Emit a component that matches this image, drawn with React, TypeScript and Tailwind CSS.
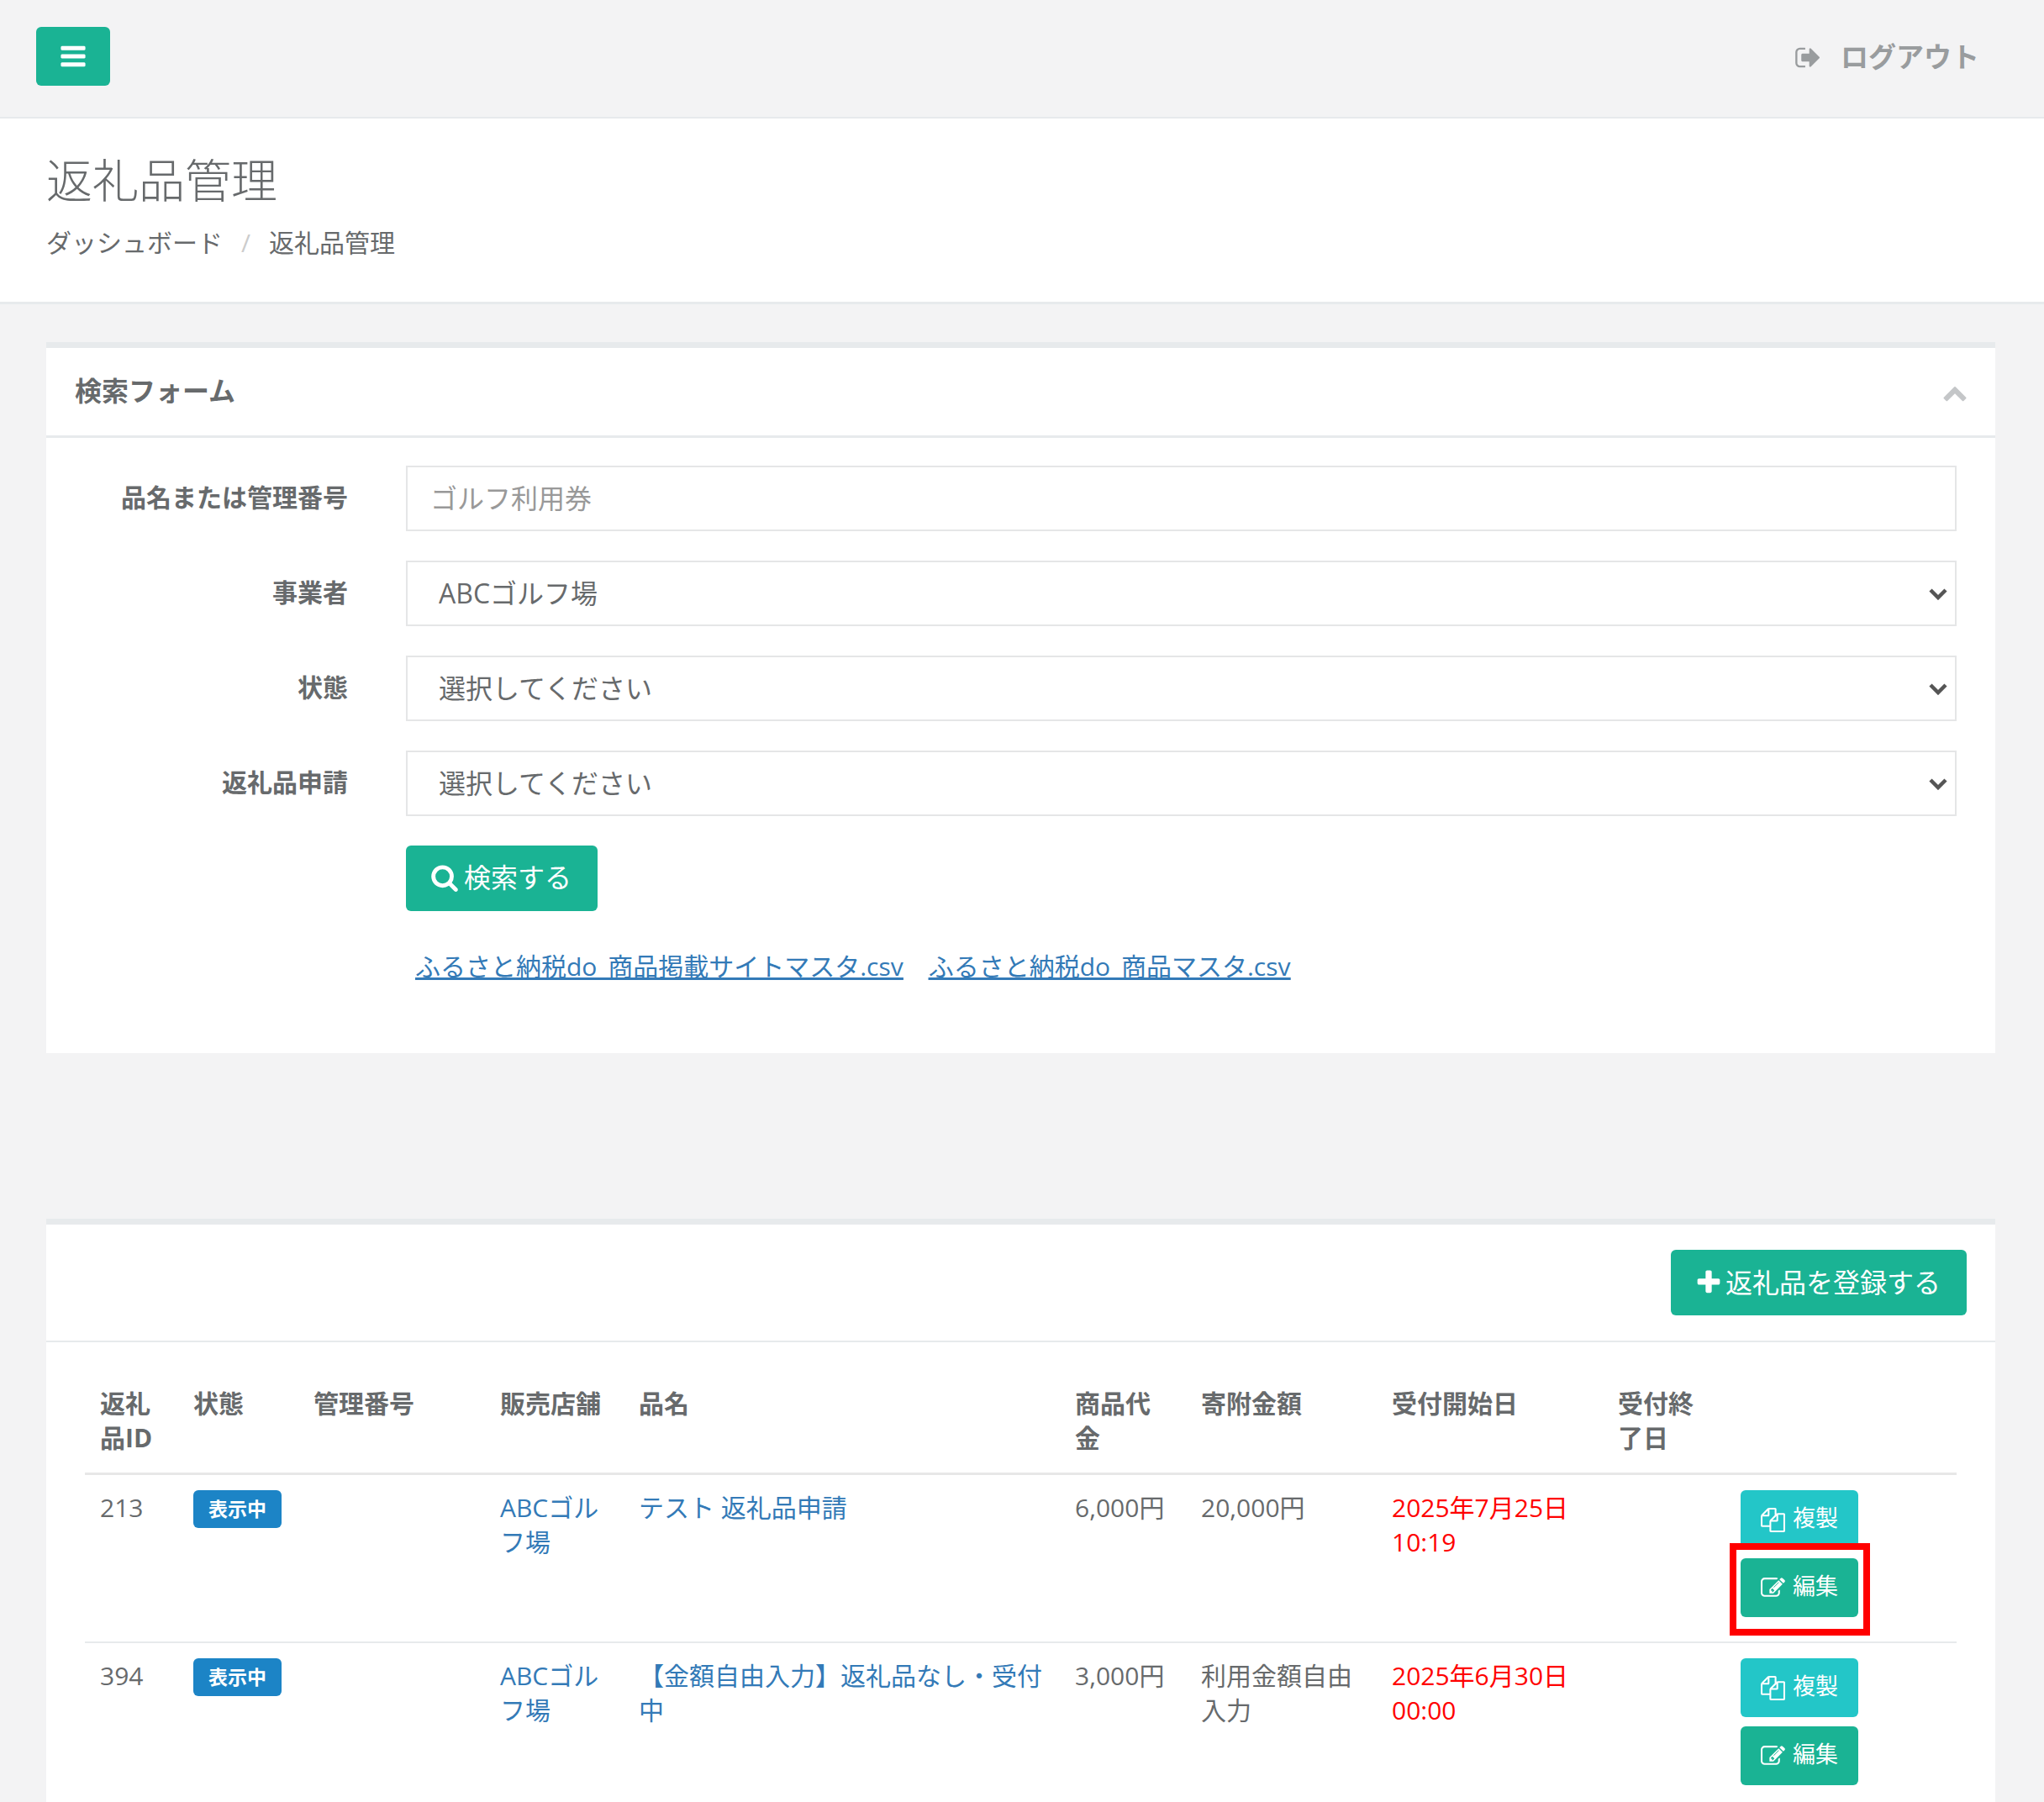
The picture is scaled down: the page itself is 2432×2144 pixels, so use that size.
import React from "react";

const Fa = ({ d, className }: { d: string; className: string }) => (
  <svg viewBox="0 0 1792 1792" fill="currentColor" className={className}>
    <path d={d} />
  </svg>
);

const COPY = "M1696 384q40 0 68 28t28 68v1216q0 40-28 68t-68 28h-960q-40 0-68-28t-28-68v-288h-544q-40 0-68-28t-28-68v-672q0-40 20-88t48-76l408-408q28-28 76-48t88-20h416q40 0 68 28t28 68v328q68-40 128-40h416zm-544 213l-299 299h299v-299zm-640-384l-299 299h299v-299zm196 647l316-316v-416h-384v416q0 40-28 68t-68 28h-416v640h512v-256q0-40 20-92t48-80zm956 804v-1152h-384v416q0 40-28 68t-68 28h-416v640h896z";
const EDIT = "M888 1184l116-116-152-152-116 116v56h96v96h56zm440-720q-16-16-33 1l-350 350q-17 17-1 33t33-1l350-350q17-17 1-33zm80 594v190q0 119-84.5 203.5t-203.5 84.5h-832q-119 0-203.5-84.5t-84.5-203.5v-832q0-119 84.5-203.5t203.5-84.5h832q63 0 117 25 15 7 18 23 3 17-9 29l-49 49q-14 14-32 8-23-6-45-6h-832q-66 0-113 47t-47 113v832q0 66 47 113t113 47h832q66 0 113-47t47-113v-126q0-13 9-22l64-64q15-15 35-7t20 29zm-96-738l288 288-672 672h-288v-288zm444 132l-92 92-288-288 92-92q28-28 68-28t68 28l152 152q28 28 28 68t-28 68z";
const SIGNOUT = "M704 1440q0 4 1 20t.5 26.5-3 23.5-10 19.5-20.5 6.5h-320q-119 0-203.5-84.5t-84.5-203.5v-704q0-119 84.5-203.5t203.5-84.5h320q13 0 22.5 9.5t9.5 22.5q0 4 1 20t.5 26.5-3 23.5-10 19.5-20.5 6.5h-320q-66 0-113 47t-47 113v704q0 66 47 113t113 47h312l11.5 1 11.5 3 8 5.5 7 9 2 13.5zm928-544q0 26-19 45l-544 544q-19 19-45 19t-45-19-19-45v-288h-448q-26 0-45-19t-19-45v-384q0-26 19-45t45-19h448v-288q0-26 19-45t45-19 45 19l544 544q19 19 19 45z";
const PLUS = "M1600 736v192q0 40-28 68t-68 28h-416v416q0 40-28 68t-68 28h-192q-40 0-68-28t-28-68v-416h-416q-40 0-68-28t-28-68v-192q0-40 28-68t68-28h416v-416q0-40 28-68t68-28h192q40 0 68 28t28 68v416h416q40 0 68 28t28 68z";
const SEARCH = "M1216 832q0-185-131.5-316.5t-316.5-131.5-316.5 131.5-131.5 316.5 131.5 316.5 316.5 131.5 316.5-131.5 131.5-316.5zm512 832q0 52-38 90t-90 38q-54 0-90-38l-343-342q-179 124-399 124-143 0-273.5-55.5t-225-150-150-225-55.5-273.5 55.5-273.5 150-225 225-150 273.5-55.5 273.5 55.5 225 150 150 225 55.5 273.5q0 220-124 399l343 343q37 37 37 90z";
const BARS = "M1664 1344v128q0 26-19 45t-45 19h-1408q-26 0-45-19t-19-45v-128q0-26 19-45t45-19h1408q26 0 45 19t19 45zm0-512v128q0 26-19 45t-45 19h-1408q-26 0-45-19t-19-45v-128q0-26 19-45t45-19h1408q26 0 45 19t19 45zm0-512v128q0 26-19 45t-45 19h-1408q-26 0-45-19t-19-45v-128q0-26 19-45t45-19h1408q26 0 45 19t19 45z";
const CHEVRON_UP = "M1683 1331l-166 165q-19 19-45 19t-45-19l-531-531-531 531q-19 19-45 19t-45-19l-166-165q-19-19-19-45.5t19-45.5l742-741q19-19 45-19t45 19l742 741q19 19 19 45.5t-19 45.5z";

const SelectRow = ({ label, value }: { label: string; value: string }) => (
  <div className="flex items-center mb-[35px]">
    <label className="w-[359px] text-right text-[30px] font-bold leading-[40px] mr-[69px] pb-[3px]">{label}</label>
    <div className="relative w-[1845px] h-[78px]">
      <select
        defaultValue={value}
        className="appearance-none w-full h-full border-2 border-[#e5e6e7] bg-white pl-[37px] text-[32px] text-[#676a6c] outline-none"
      >
        <option>{value}</option>
      </select>
      <svg viewBox="0 0 22 14" className="absolute right-[11px] top-[33px] w-[22px] h-[14px] text-[#555555]" fill="none" stroke="currentColor" strokeWidth="4.5">
        <polyline points="2,2 11,11 20,2" />
      </svg>
    </div>
  </div>
);

const ActionButtons = () => (
  <div className="flex flex-col gap-[11px] w-[140px] ml-[1px]">
    <button className="h-[70px] rounded-[6px] bg-[#23c6c8] text-white flex items-center justify-center gap-[9px] text-[27px]">
      <Fa d={COPY} className="w-[29px] h-[29px]" />
      <span className="pb-[5px]">複製</span>
    </button>
    <button className="h-[70px] rounded-[6px] bg-[#1ab394] text-white flex items-center justify-center gap-[9px] text-[27px]">
      <Fa d={EDIT} className="w-[29px] h-[29px]" />
      <span className="pb-[5px]">編集</span>
    </button>
  </div>
);

const Badge = () => (
  <span className="flex items-center justify-center w-[105px] h-[45px] rounded-[6px] bg-[#1c84c6] text-white text-[23px] font-bold leading-none">
    表示中
  </span>
);

const Th = ({ children }: { children?: React.ReactNode }) => (
  <th className="pl-[18px] pr-[20px] pt-[18px] pb-[21px] text-left align-top font-bold border-b-[3px] border-[#e7e7e7]">{children}</th>
);

const Td = ({ children, className = "" }: { children?: React.ReactNode; className?: string }) => (
  <td className={`pl-[18px] pr-[20px] pt-[18px] pb-[29px] align-top border-b-2 border-[#e7eaec] ${className}`}>{children}</td>
);

const rows = [
  { id: "213", name: "テスト 返礼品申請", price: "6,000円", donation: "20,000円", start: "2025年7月25日 10:19" },
  { id: "394", name: "【金額自由入力】返礼品なし・受付中", price: "3,000円", donation: "利用金額自由入力", start: "2025年6月30日 00:00" },
];

export default function App() {
  return (
    <div className="relative h-[2144px] overflow-hidden bg-[#f3f3f4] text-[#676a6c] font-['Open_Sans','Noto_Sans_CJK_JP',sans-serif]">
      <header className="h-[141px] border-b-2 border-[#e7eaec] flex items-start justify-between">
        <button className="ml-[43px] mt-[32px] w-[88px] h-[70px] rounded-[6px] bg-[#1ab394] text-white flex items-center justify-center">
          <Fa d={BARS} className="w-[34px] h-[34px]" />
        </button>
        <div className="mr-[77px] mt-[46px] flex items-center text-[#999c9e] text-[33px] font-semibold leading-[44px]">
          <Fa d={SIGNOUT} className="w-[33px] h-[33px] mr-[22px]" />
          <span>ログアウト</span>
        </div>
      </header>

      <section className="bg-white h-[221px] border-b-[3px] border-[#e7eaec] pl-[55px] pt-[43px]">
        <h2 className="text-[55px] font-light leading-[60px]">返礼品管理</h2>
        <div className="mt-[25px] flex items-center text-[30px] leading-[40px]">
          <span>ダッシュボード</span>
          <span className="text-[#cccccc] mx-[22px]">/</span>
          <span>返礼品管理</span>
        </div>
      </section>

      <div className="ml-[55px] mr-[58px] mt-[45px]">
        <section className="bg-white border-t-[7px] border-[#e7eaec] h-[846px]">
          <div className="h-[107px] border-b-[3px] border-[#e7eaec] flex items-center justify-between pl-[34px] pr-[33px]">
            <h5 className="text-[32px] font-bold leading-[40px] pb-[3px]">検索フォーム</h5>
            <span className="text-[#c4c6c8] mt-[1px]">
              <Fa d={CHEVRON_UP} className="w-[30px] h-[30px]" />
            </span>
          </div>
          <div className="pt-[33px]">
            <div className="flex items-center mb-[35px]">
              <label className="w-[359px] text-right text-[30px] font-bold leading-[40px] mr-[69px] pb-[3px]">品名または管理番号</label>
              <input
                placeholder="ゴルフ利用券"
                className="w-[1845px] h-[78px] border-2 border-[#e5e6e7] bg-white pl-[27px] pr-[28px] pb-[2px] text-[32px] placeholder:text-[#999999] outline-none"
              />
            </div>
            <SelectRow label="事業者" value="ABCゴルフ場" />
            <SelectRow label="状態" value="選択してください" />
            <SelectRow label="返礼品申請" value="選択してください" />
            <div className="ml-[428px]">
              <button className="w-[228px] h-[78px] rounded-[6px] bg-[#1ab394] text-white text-[32px] flex items-center justify-center gap-[6px] pb-[2px] pr-[2px]">
                <Fa d={SEARCH} className="w-[34px] h-[34px]" />
                <span>検索する</span>
              </button>
              <div className="mt-[46px] ml-[11px] flex gap-[30px] text-[30px] leading-[40px] text-[#337ab7] underline [word-spacing:5px]">
                <a href="#">ふるさと納税do 商品掲載サイトマスタ.csv</a>
                <a href="#">ふるさと納税do 商品マスタ.csv</a>
              </div>
            </div>
          </div>
        </section>

        <section className="bg-white border-t-[7px] border-[#e7eaec] mt-[197px]">
          <div className="h-[140px] border-b-2 border-[#e7eaec] flex items-center justify-end pr-[34px]">
            <button className="w-[352px] h-[78px] rounded-[6px] bg-[#1ab394] text-white text-[32px] flex items-center justify-center gap-[3px] pr-[3px]">
              <Fa d={PLUS} className="w-[34px] h-[34px]" />
              <span>返礼品を登録する</span>
            </button>
          </div>
          <div className="pt-[34px] px-[46px]">
            <table className="w-[2227px] table-fixed border-collapse text-[30px] leading-[41px]">
              <colgroup>
                <col className="w-[111px]" />
                <col className="w-[143px]" />
                <col className="w-[222px]" />
                <col className="w-[165px]" />
                <col className="w-[519px]" />
                <col className="w-[150px]" />
                <col className="w-[227px]" />
                <col className="w-[269px]" />
                <col className="w-[145px]" />
                <col className="w-[276px]" />
              </colgroup>
              <thead>
                <tr>
                  <Th>返礼品ID</Th>
                  <Th>状態</Th>
                  <Th>管理番号</Th>
                  <Th>販売店舗</Th>
                  <Th>品名</Th>
                  <Th>商品代金</Th>
                  <Th>寄附金額</Th>
                  <Th>受付開始日</Th>
                  <Th>受付終了日</Th>
                  <Th />
                </tr>
              </thead>
              <tbody>
                {rows.map((r) => (
                  <tr key={r.id}>
                    <Td>{r.id}</Td>
                    <Td><Badge /></Td>
                    <Td />
                    <Td className="text-[#337ab7]">ABCゴルフ場</Td>
                    <Td className="text-[#337ab7]">{r.name}</Td>
                    <Td>{r.price}</Td>
                    <Td>{r.donation}</Td>
                    <Td className="text-[#ff0000]">{r.start}</Td>
                    <Td />
                    <Td><ActionButtons /></Td>
                  </tr>
                ))}
              </tbody>
            </table>
          </div>
        </section>
      </div>

      <div className="absolute left-[2058px] top-[1836px] w-[167px] h-[110px] border-[8px] border-[#ff0000]" />
    </div>
  );
}
